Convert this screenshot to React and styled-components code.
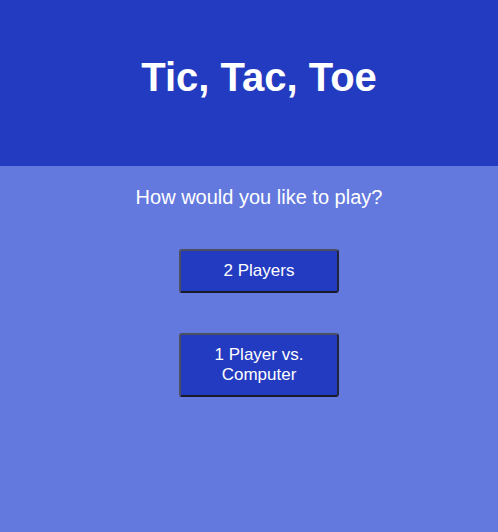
import React from 'react';
import styled, { createGlobalStyle } from 'styled-components';

const Global = createGlobalStyle`
  html, body {
    margin: 0;
    padding: 0;
    height: 100%;
    background: #6379de;
    font-family: "Liberation Sans", Arial, sans-serif;
  }
`;

const Header = styled.header`
  height: 166px;
  background: #233bc0;
  display: flex;
  align-items: center;
  justify-content: center;
  padding: 0 0 12px 20px;
  box-sizing: border-box;
`;

const Title = styled.h1`
  margin: 0;
  color: #fff;
  font-size: 40px;
  font-weight: bold;
`;

const Main = styled.main`
  display: flex;
  flex-direction: column;
  align-items: center;
  padding: 20px 0 0 20px;
`;

const Prompt = styled.p`
  margin: 0 0 40px;
  color: #fff;
  font-size: 20px;
  line-height: 23px;
`;

const Choices = styled.div`
  display: flex;
  flex-direction: column;
  align-items: center;
  gap: 40px;
`;

const Choice = styled.button`
  width: 160px;
  box-sizing: border-box;
  padding: 10px 16px;
  background: #233bc0;
  color: #fff;
  border: 2px solid #4c4f60;
  border-right-color: #23263a;
  border-bottom-color: #181a28;
  border-radius: 3px;
  font-family: "Liberation Sans", Arial, sans-serif;
  font-size: 17px;
  line-height: 20px;
  cursor: pointer;
`;

export default function App() {
  return (
    <>
      <Global />
      <Header>
        <Title>Tic, Tac, Toe</Title>
      </Header>
      <Main>
        <Prompt>How would you like to play?</Prompt>
        <Choices>
          <Choice>2 Players</Choice>
          <Choice>1 Player vs. Computer</Choice>
        </Choices>
      </Main>
    </>
  );
}
